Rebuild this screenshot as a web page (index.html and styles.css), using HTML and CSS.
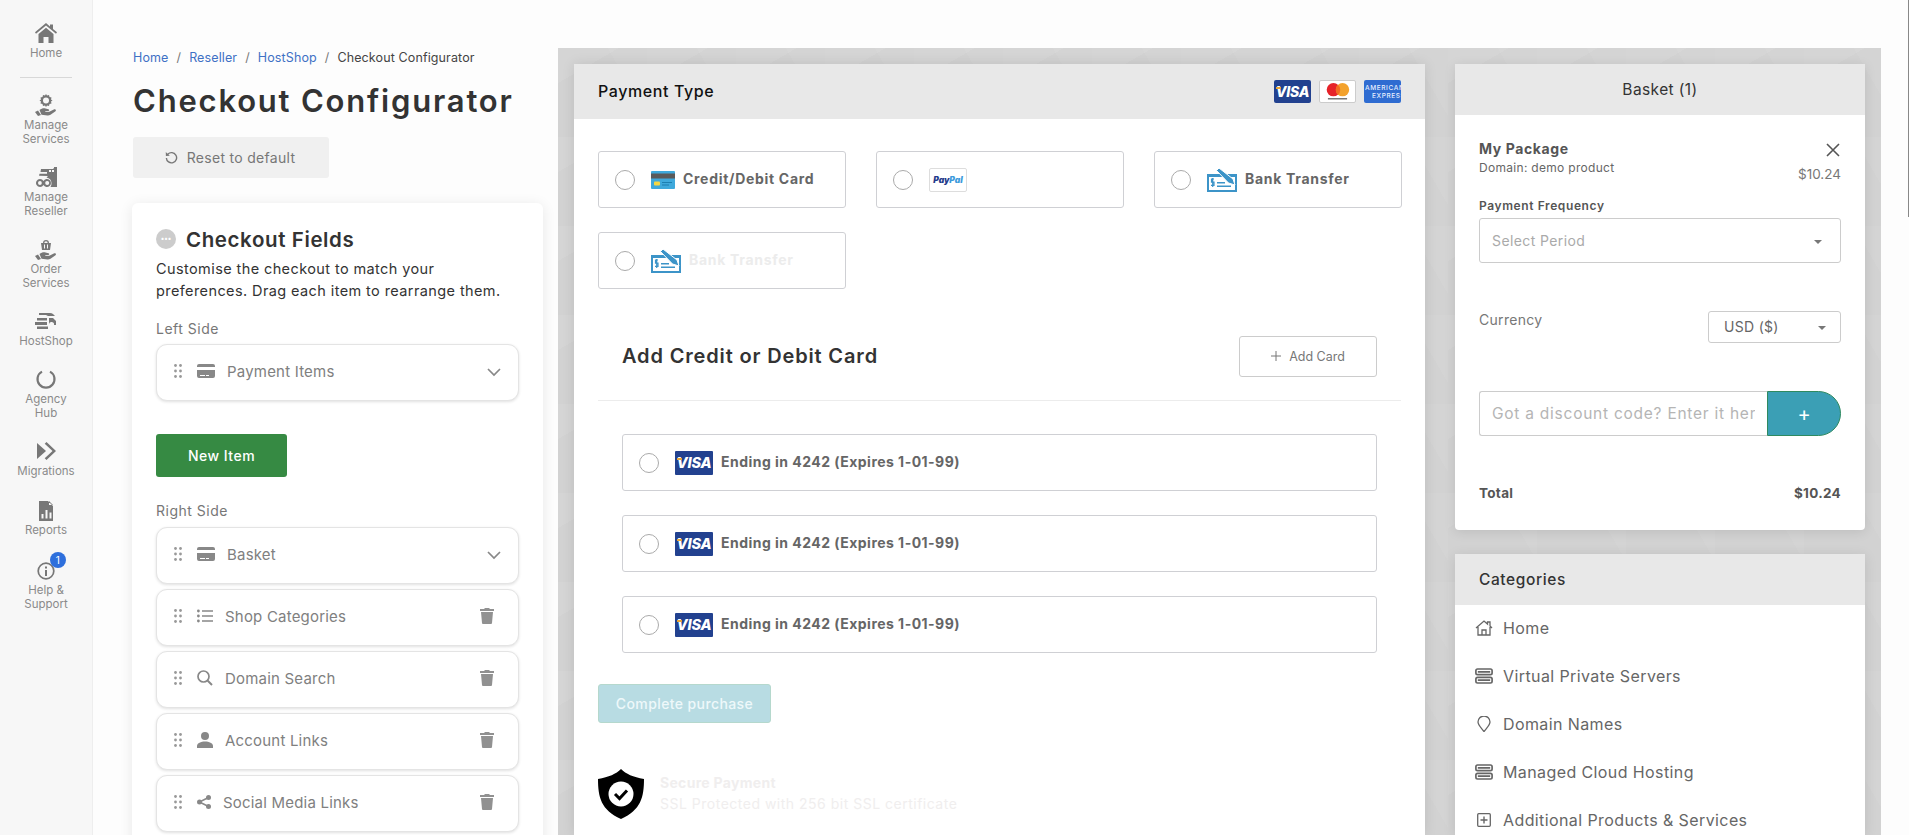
FILE: index.html
```html
<!DOCTYPE html>
<html lang="en">
<head>
  <meta charset="UTF-8">
  <meta name="viewport" content="width=device-width, initial-scale=1.0">
  <link rel="stylesheet" href="styles.css">
  <title>Checkout Configurator</title>
</head>
<body>
  <svg class="defs" width="0" height="0">
    <symbol id="i-grip" viewBox="0 0 8 14"><circle cx="1.5" cy="1.5" r="1.4"/><circle cx="6.5" cy="1.5" r="1.4"/><circle cx="1.5" cy="7" r="1.4"/><circle cx="6.5" cy="7" r="1.4"/><circle cx="1.5" cy="12.5" r="1.4"/><circle cx="6.5" cy="12.5" r="1.4"/></symbol>
    <symbol id="i-card" viewBox="0 0 18 14"><path d="M2 0h14a2 2 0 0 1 2 2v1H0V2a2 2 0 0 1 2-2zM0 6h18v6a2 2 0 0 1-2 2H2a2 2 0 0 1-2-2zm3 5v1h5v-1zm6 0v1h3v-1z" fill-rule="evenodd"/></symbol>
    <symbol id="i-chevron" viewBox="0 0 14 9"><path d="M1 1l6 6 6-6" fill="none" stroke="currentColor" stroke-width="1.7"/></symbol>
    <symbol id="i-trash" viewBox="0 0 14 16"><path d="M5 0h4l1 1h4v2H0V1h4zM1 4h12l-1 11a1 1 0 0 1-1 1H3a1 1 0 0 1-1-1z"/></symbol>
    <symbol id="i-list" viewBox="0 0 16 13"><circle cx="1.4" cy="1.5" r="1.4"/><circle cx="1.4" cy="6.5" r="1.4"/><circle cx="1.4" cy="11.5" r="1.4"/><path d="M5 .7h11v1.6H5zM5 5.7h11v1.6H5zM5 10.7h11v1.6H5z"/></symbol>
    <symbol id="i-search" viewBox="0 0 16 16"><circle cx="6.500" cy="6.500" r="5.500" fill="none" stroke="currentColor" stroke-width="1.700"/><path d="M10.500 10.500l4.500 4.500" stroke="currentColor" stroke-width="1.900" fill="none"/></symbol>
    <symbol id="i-user" viewBox="0 0 16 16"><circle cx="8" cy="4" r="4"/><path d="M0 16v-2c0-3 4-4.500 8-4.500s8 1.500 8 4.500v2z"/></symbol>
    <symbol id="i-share" viewBox="0 0 14 14"><circle cx="11.500" cy="2.500" r="2.500"/><circle cx="11.500" cy="11.500" r="2.500"/><circle cx="2.500" cy="7" r="2.500"/><path d="M2.500 7l9-4.500M2.500 7l9 4.500" stroke="currentColor" stroke-width="1.500" fill="none"/></symbol>
    <symbol id="i-server" viewBox="0 0 16 14"><rect x=".8" y=".8" width="14.400" height="5" rx="1.500" fill="none" stroke="currentColor" stroke-width="1.500"/><rect x=".8" y="8.200" width="14.400" height="5" rx="1.500" fill="none" stroke="currentColor" stroke-width="1.500"/><path d="M2.500 2.500h11v1.600h-11zM2.500 9.900h11v1.600h-11z"/></symbol>
  </svg>

  <nav class="rail">
    <a class="rail-item">
      <svg class="rail-icon" viewBox="0 0 22 20"><path d="M11 0l4 3.400V1.500h3v4.400l4 3.400-1 1.400L11 2.400 1 10.700 0 9.300zM3.500 11L11 4.800l7.500 6.200v9h-5v-6h-5v6h-5z"/></svg>
      <span>Home</span>
    </a>
    <hr class="rail-line">
    <a class="rail-item">
      <svg class="rail-icon" viewBox="0 0 22 22"><path d="M11 0l1 1.500 2-.5.500 2 2 .5-.5 2 1.500 1-1.500 1 .5 2-2 .5-.5 2-2-.5-1 1.500-1-1.500-2 .5-.5-2-2-.5.500-2L4.500 6.500 6 5.500l-.5-2 2-.5.500-2 2 .5zm0 3.500a3 3 0 1 0 0 6 3 3 0 0 0 0-6z" fill-rule="evenodd"/><path d="M0 18l3-1.500 3 4.500-3 1zM4.500 16c2-1.500 4-2 6-1.500l3 .8c1 .3 1 1.700-.2 1.800l-3 .1v.7l4-.1 5-2.500c1.300-.5 2.300 1 1.200 1.900l-5 3.500c-1 .6-2 .8-3 .7l-6-.6z"/></svg>
      <span>Manage<br>Services</span>
    </a>
    <a class="rail-item">
      <svg class="rail-icon" viewBox="0 0 22 20"><path d="M6 2h12l1-1v-1h3v20H15.500a6 6 0 0 0 1-4 6 6 0 0 0-5-5.500L13 9l-9-.2.500-2H12V5H5.500zM14 3v2h2V3zm3 0v2h2V3z" fill-rule="evenodd"/><path d="M5 12a4 4 0 0 1 3.500 2 4 4 0 1 1 0 4A4 4 0 1 1 5 12zm0 2a2 2 0 1 0 0 4 2 2 0 0 0 1.800-2A2 2 0 0 0 5 14zm7 0a2 2 0 0 0-1.800 2 2 2 0 1 0 1.800-2z" fill-rule="evenodd"/></svg>
      <span>Manage<br>Reseller</span>
    </a>
    <a class="rail-item">
      <svg class="rail-icon" viewBox="0 0 22 22"><path d="M6 5h10l-1 7H7zM9 6.500v4h1v-4zm3 0v4h1v-4z" fill-rule="evenodd"/><path d="M8 5a3 3 0 0 1 6 0h-1.300a1.700 1.700 0 0 0-3.400 0z"/><path d="M0 18l3-1.500 3 4.500-3 1zM4.500 16c2-1.500 4-2 6-1.500l3 .8c1 .3 1 1.700-.2 1.800l-3 .1v.7l4-.1 5-2.500c1.300-.5 2.300 1 1.200 1.900l-5 3.500c-1 .6-2 .8-3 .7l-6-.6z"/></svg>
      <span>Order<br>Services</span>
    </a>
    <a class="rail-item">
      <svg class="rail-icon" viewBox="0 0 22 20"><path d="M4 2h11a5 5 0 0 1 3 1l2 2h-7l-2-1H4zM2 7h10v2.500H2zM0 11h12v3H0zM14 7h4l3 3v4h-2a2.500 2.500 0 0 0-5-1zM2 15.500h11V18H2z"/></svg>
      <span>HostShop</span>
    </a>
    <a class="rail-item">
      <svg class="rail-icon" viewBox="0 0 22 22"><path d="M15 3.600A8.500 8.500 0 1 1 7 3.600" fill="none" stroke="currentColor" stroke-width="2.200"/></svg>
      <span>Agency<br>Hub</span>
    </a>
    <a class="rail-item">
      <svg class="rail-icon" viewBox="0 0 22 20"><path d="M2 2l9 8-9 8zM11.500 1L21 10l-9.500 9-1.800-1.800L17.500 10 9.700 2.800z"/></svg>
      <span>Migrations</span>
    </a>
    <a class="rail-item rail-reports">
      <svg class="rail-icon" viewBox="0 0 22 22"><path d="M4 2h9l5 5v15H4zM14 2l4 4h-4zM6.500 15v4.500h2V15zm4-4v8.500h2V11zm4 2.500v6h2v-6z" fill-rule="evenodd"/></svg>
      <span>Reports</span>
    </a>
    <a class="rail-item rail-help">
      <i class="rail-badge">1</i>
      <svg class="rail-icon" viewBox="0 0 22 22"><circle cx="11" cy="12" r="7.800" fill="none" stroke="currentColor" stroke-width="1.700"/><path d="M10 11h2v6h-2zM10 7.500h2v2h-2z"/></svg>
      <span>Help &amp;<br>Support</span>
    </a>
  </nav>

  <section class="config">
    <div class="crumbs">
      <a>Home</a><i>/</i><a>Reseller</a><i>/</i><a>HostShop</a><i>/</i><span>Checkout Configurator</span>
    </div>
    <h1>Checkout Configurator</h1>
    <button class="reset">
      <svg class="reset-icon" viewBox="0 0 14 14"><path d="M3 3.500A5.500 5.500 0 1 1 1.500 7.500" fill="none" stroke="currentColor" stroke-width="1.500"/><path d="M.8 1.200L1 5.500l4.200-.4z"/></svg>
      Reset to default
    </button>

    <div class="fields">
      <h2><span class="dots">&#8226;&#8226;&#8226;</span>Checkout Fields</h2>
      <p class="intro">Customise the checkout to match your<br>preferences. Drag each item to rearrange them.</p>

      <div class="side-label first">Left Side</div>
      <div class="field">
        <svg class="grip"><use href="#i-grip"/></svg>
        <svg class="ficon wide"><use href="#i-card"/></svg>
        <span class="fname">Payment Items</span>
        <svg class="chev"><use href="#i-chevron"/></svg>
      </div>

      <button class="new-item">New Item</button>

      <div class="side-label">Right Side</div>
      <div class="field">
        <svg class="grip"><use href="#i-grip"/></svg>
        <svg class="ficon wide"><use href="#i-card"/></svg>
        <span class="fname">Basket</span>
        <svg class="chev"><use href="#i-chevron"/></svg>
      </div>
      <div class="field">
        <svg class="grip"><use href="#i-grip"/></svg>
        <svg class="ficon"><use href="#i-list"/></svg>
        <span class="fname">Shop Categories</span>
        <svg class="bin"><use href="#i-trash"/></svg>
      </div>
      <div class="field">
        <svg class="grip"><use href="#i-grip"/></svg>
        <svg class="ficon"><use href="#i-search"/></svg>
        <span class="fname">Domain Search</span>
        <svg class="bin"><use href="#i-trash"/></svg>
      </div>
      <div class="field">
        <svg class="grip"><use href="#i-grip"/></svg>
        <svg class="ficon"><use href="#i-user"/></svg>
        <span class="fname">Account Links</span>
        <svg class="bin"><use href="#i-trash"/></svg>
      </div>
      <div class="field">
        <svg class="grip"><use href="#i-grip"/></svg>
        <svg class="ficon tiny"><use href="#i-share"/></svg>
        <span class="fname">Social Media Links</span>
        <svg class="bin"><use href="#i-trash"/></svg>
      </div>
    </div>
  </section>

  <section class="preview">
    <div class="pay-card">
      <div class="pay-head">
        <span>Payment Type</span>
        <div class="brands">
          <span class="visa"><b>VISA</b></span>
          <span class="mc"><svg viewBox="0 0 37 23"><circle cx="14" cy="9.500" r="7.300" fill="#e62229"/><circle cx="24" cy="9.500" r="7.300" fill="#f3a22d"/><path d="M19 4a7.300 7.300 0 0 1 0 11 7.300 7.300 0 0 1 0-11z" fill="#f36b21"/><path d="M8 19.500h21" stroke="#777" stroke-width="1.500"/></svg></span>
          <span class="amex">AMERICAN<br><em>EXPRESS</em></span>
        </div>
      </div>
      <div class="pay-body">
        <div class="options">
          <label class="option">
            <i class="radio"></i>
            <svg class="opt-icon" viewBox="0 0 24 18"><rect width="24" height="18" rx="1" fill="#3fa9dc"/><rect y="2.500" width="24" height="5" fill="#5a5a5a"/><rect x="3" y="10.500" width="6" height="4" rx="1" fill="#f6d743"/><path d="M11 11h10v1H11zM11 13.500h7v1h-7z" fill="#1d7fb0"/></svg>
            <span>Credit/Debit Card</span>
          </label>
          <label class="option">
            <i class="radio"></i>
            <span class="paypal"><b>Pay</b><b>Pal</b></span>
          </label>
          <label class="option">
            <i class="radio"></i>
            <svg class="opt-icon bank" viewBox="0 0 30 24"><path d="M0 6h30v18H0zM2 9v13h26V9z" fill-rule="evenodd"/><path d="M9.500 2.500L12 0l14 11 2 6-6.500-2z" stroke="#fff" stroke-width="1"/><path d="M7 11H4.500v3.200H7v3.200H4M5.700 10v9" fill="none" stroke="currentColor" stroke-width="1.200"/><path d="M10 14h8v1.500h-8zM10 17.500h14V19H10z"/></svg>
            <span>Bank Transfer</span>
          </label>
          <label class="option">
            <i class="radio"></i>
            <svg class="opt-icon bank" viewBox="0 0 30 24"><path d="M0 6h30v18H0zM2 9v13h26V9z" fill-rule="evenodd"/><path d="M9.500 2.500L12 0l14 11 2 6-6.500-2z" stroke="#fff" stroke-width="1"/><path d="M7 11H4.500v3.200H7v3.200H4M5.700 10v9" fill="none" stroke="currentColor" stroke-width="1.200"/><path d="M10 14h8v1.500h-8zM10 17.500h14V19H10z"/></svg>
            <span class="faded">Bank Transfer</span>
          </label>
        </div>

        <div class="add-row">
          <h3>Add Credit or Debit Card</h3>
          <button class="add-card"><svg viewBox="0 0 10 10"><path d="M5 0v10M0 5h10" stroke="currentColor" stroke-width="1"/></svg>Add Card</button>
        </div>

        <div class="saved">
          <label class="saved-row"><i class="radio"></i><span class="visa big"><b>VISA</b></span><span>Ending in 4242 (Expires 1-01-99)</span></label>
          <label class="saved-row"><i class="radio"></i><span class="visa big"><b>VISA</b></span><span>Ending in 4242 (Expires 1-01-99)</span></label>
          <label class="saved-row"><i class="radio"></i><span class="visa big"><b>VISA</b></span><span>Ending in 4242 (Expires 1-01-99)</span></label>
        </div>

        <button class="complete">Complete purchase</button>

        <div class="secure">
          <svg class="shield" viewBox="0 0 46 50"><path d="M23 0c5 5 12 8 23 10 0 18-3 31-23 40C3 41 0 28 0 10 11 8 18 5 23 0z"/><circle cx="23" cy="25" r="12.500" fill="#fff"/><path d="M17 25l4.500 4.500L29 21.500" fill="none" stroke="#000" stroke-width="3"/></svg>
          <div class="secure-text">
            <b>Secure Payment</b>
            <span>SSL Protected with 256 bit SSL certificate</span>
          </div>
        </div>
      </div>
    </div>

    <div class="right-col">
      <div class="basket">
        <div class="basket-head">Basket (1)</div>
        <div class="basket-body">
          <div class="pack">
            <div>
              <div class="pack-name">My Package</div>
              <div class="pack-domain">Domain: demo product</div>
            </div>
            <div class="pack-side">
              <svg class="close" viewBox="0 0 14 14"><path d="M1 1l12 12M13 1L1 13" stroke="currentColor" stroke-width="1.600"/></svg>
              <span>$10.24</span>
            </div>
          </div>
          <div class="freq-label">Payment Frequency</div>
          <div class="select period"><span>Select Period</span><i class="caret"></i></div>
          <div class="currency">
            <span>Currency</span>
            <div class="select select-sm"><span>USD ($)</span><i class="caret"></i></div>
          </div>
          <div class="discount">
            <div class="discount-input"><span>Got a discount code? Enter it here</span></div>
            <button class="discount-btn">+</button>
          </div>
          <div class="total"><span>Total</span><span>$10.24</span></div>
        </div>
      </div>

      <div class="cats">
        <div class="cats-head">Categories</div>
        <a class="cat"><svg viewBox="0 0 18 16"><path d="M1 8l8-7 3.500 3V2H15v4l2 2M3 7v8h12V7M7 15v-5h4v5" fill="none" stroke="currentColor" stroke-width="1.300"/></svg>Home</a>
        <a class="cat"><svg><use href="#i-server"/></svg>Virtual Private Servers</a>
        <a class="cat"><svg viewBox="0 0 18 16"><path d="M9 15.500C6 11.500 3 9 3 6a6 6 0 0 1 12 0c0 3-3 5.500-6 9.500z" fill="none" stroke="currentColor" stroke-width="1.300"/></svg>Domain Names</a>
        <a class="cat"><svg><use href="#i-server"/></svg>Managed Cloud Hosting</a>
        <a class="cat"><svg viewBox="0 0 18 16"><rect x="2.700" y="1.700" width="12.600" height="12.600" rx="1" fill="none" stroke="currentColor" stroke-width="1.300"/><path d="M9 4.500v7M5.500 8h7" stroke="currentColor" stroke-width="1.400"/></svg>Additional Products &amp; Services</a>
      </div>
    </div>
  </section>

  <div class="scroll-thumb"></div>
</body>
</html>
```

FILE: styles.css
```css
* {
  box-sizing: border-box;
}

html,
body {
  height: 100%;
  overflow: hidden;
}

body {
  margin: 0;
  display: flex;
  font-family: Inter, "Noto Sans", sans-serif;
  color: #666;
  background: #fdfdfd;
}

.defs {
  position: absolute;
}

svg {
  fill: currentColor;
}

button {
  font-family: inherit;
  cursor: pointer;
}

/* left icon rail */
.rail {
  width: 93px;
  flex: none;
  padding-top: 22px;
  display: flex;
  flex-direction: column;
  align-items: center;
  gap: 20px;
  background: #f7f7f7;
  border-right: 1px solid #eee;
}

.rail-item {
  position: relative;
  display: flex;
  flex-direction: column;
  align-items: center;
  font-size: 11.5px;
  line-height: 14px;
  text-align: center;
  color: #8a8a8a;
}

.rail-reports {
  margin-top: 1px;
}

.rail-help {
  margin-top: 2px;
}

.rail-icon {
  width: 22px;
  height: 22px;
  margin-bottom: 2px;
  color: #777;
}

.rail-line {
  width: 52px;
  margin: -3px 0 -4px;
  border: 0;
  border-top: 1px solid #d8d8d8;
}

.rail-badge {
  position: absolute;
  top: -7px;
  right: 2px;
  width: 16px;
  height: 16px;
  border-radius: 50%;
  background: #2e6fdc;
  color: #fff;
  font-style: normal;
  font-size: 10px;
  line-height: 16px;
}

/* configurator column */
.config {
  width: 465px;
  height: 835px;
  flex: none;
  overflow: hidden;
  padding: 48px 15px 0 40px;
}

.crumbs {
  display: flex;
  height: 18px;
  align-items: center;
  font-size: 12.5px;
  letter-spacing: .12px;
  color: #444;
  white-space: nowrap;
}

.crumbs a {
  color: #3f71c5;
}

.crumbs i {
  margin: 0 8px;
  font-style: normal;
  color: #777;
}

h1 {
  margin: 15px 0 16px;
  font-size: 31px;
  line-height: 40px;
  font-weight: 600;
  color: #333;
  letter-spacing: 1.8px;
  white-space: nowrap;
}

.reset {
  display: flex;
  align-items: center;
  justify-content: center;
  gap: 9px;
  width: 196px;
  height: 41px;
  padding-right: 8px;
  border: 0;
  border-radius: 3px;
  background: #f0f0f0;
  font-size: 14px;
  letter-spacing: .3px;
  color: #777;
}

.reset-icon {
  width: 13px;
  height: 13px;
}

.fields {
  height: 800px;
  margin: 25px 0 0 -1px;
  padding: 26px 24px 0 24px;
  background: #fff;
  border-radius: 6px;
  box-shadow: 0 2px 14px rgba(0, 0, 0, .09);
}

h2 {
  display: flex;
  align-items: center;
  gap: 10px;
  height: 20px;
  margin: 0;
  font-size: 20.5px;
  font-weight: 600;
  letter-spacing: .6px;
  color: #333;
  white-space: nowrap;
}

.dots {
  width: 20px;
  height: 20px;
  border-radius: 50%;
  background: #ccc;
  color: #fff;
  font-size: 7px;
  line-height: 20px;
  letter-spacing: 0;
  text-align: center;
}

.intro {
  margin: 9px 0 0;
  font-size: 14.5px;
  line-height: 22px;
  letter-spacing: .4px;
  color: #333;
  white-space: nowrap;
}

.side-label {
  margin: 24px 0 6px;
  font-size: 14px;
  line-height: 20px;
  letter-spacing: .5px;
  color: #777;
}

.side-label.first {
  margin-top: 17px;
  margin-bottom: 5px;
}

.field {
  display: flex;
  align-items: center;
  height: 57px;
  margin-bottom: 5px;
  padding: 0 17px 3px 17px;
  background: #fff;
  border: 1px solid #e4e4e4;
  border-radius: 11px;
  box-shadow: 0 1px 3px rgba(0, 0, 0, .12);
  font-size: 15px;
  letter-spacing: .2px;
  color: #808080;
}

.grip {
  width: 8px;
  height: 14px;
  margin: 0 15px 0 0;
  color: #999;
}

.ficon {
  width: 16px;
  height: 16px;
  margin-right: 12px;
  color: #888;
}

.ficon.wide {
  width: 18px;
  height: 14px;
}

.ficon.tiny {
  width: 14px;
  height: 14px;
}

.fname {
  flex: 1;
  white-space: nowrap;
}

.chev {
  width: 14px;
  height: 9px;
  margin-top: 3px;
  color: #888;
}

.bin {
  width: 14px;
  height: 16px;
  margin-right: 7px;
  color: #919191;
}

.new-item {
  display: block;
  width: 131px;
  height: 43px;
  margin-top: 33px;
  border: 0;
  border-radius: 3px;
  background: #368a43;
  color: #fff;
  font-size: 14px;
  font-weight: 500;
  letter-spacing: .5px;
}

/* preview pane */
.preview {
  flex: none;
  display: flex;
  gap: 30px;
  width: 1323px;
  height: 787px;
  margin-top: 48px;
  padding: 16px 16px 0;
  overflow: hidden;
  background-color: #d2d2d2;
  background-image:
    linear-gradient(150deg, rgba(255, 255, 255, .07) 25%, transparent 25%),
    linear-gradient(60deg, transparent 72%, rgba(255, 255, 255, .05) 72%);
  background-size: 89px 89px;
}

.pay-card {
  width: 851px;
  flex: none;
  height: 771px;
  background: #fff;
  box-shadow: 0 0 12px rgba(0, 0, 0, .1);
}

.pay-head {
  display: flex;
  align-items: center;
  justify-content: space-between;
  height: 55px;
  padding: 0 24px;
  background: #e8e8e8;
  font-size: 16px;
  font-weight: 500;
  letter-spacing: .6px;
  color: #111;
}

.pay-head > span {
  margin-bottom: 2px;
}

.brands {
  display: flex;
  gap: 8px;
}

.brands > span {
  display: block;
  width: 37px;
  height: 23px;
  border-radius: 2px;
  overflow: hidden;
}

.visa {
  position: relative;
  background: #22418f;
  color: #fff;
  font-size: 14px;
  line-height: 23px;
  text-align: center;
  font-style: italic;
  letter-spacing: -.2px;
}

.visa::before {
  content: "";
  position: absolute;
  top: 7px;
  left: 2px;
  width: 5px;
  height: 2px;
  background: #e9a63a;
}

.visa b {
  font-weight: 800;
}

.brands .mc {
  background: #fff;
  border: 1px solid #ccc;
}

.mc svg {
  display: block;
  width: 100%;
  height: 100%;
}

.amex {
  padding: 4px 0 0 1px;
  background: #2f6cd1;
  color: #e8f0ff;
  font-size: 6.5px;
  line-height: 8px;
  white-space: nowrap;
}

.amex em {
  margin-left: 7px;
  font-style: normal;
}

.pay-body {
  padding: 32px 24px 0;
}

.options {
  display: grid;
  grid-template-columns: repeat(3, 248px);
  justify-content: space-between;
  gap: 24px 30px;
}

.option {
  display: flex;
  align-items: center;
  height: 57px;
  padding: 0 0 0 16px;
  border: 1px solid #cfd0d4;
  border-radius: 3px;
  font-size: 14px;
  font-weight: 700;
  letter-spacing: .7px;
  color: #666;
  white-space: nowrap;
}

.option span,
.saved-row > span:last-child {
  margin-bottom: 2px;
}

.radio {
  flex: none;
  width: 20px;
  height: 20px;
  border: 1px solid #aaa;
  border-radius: 50%;
  background: #fff;
}

.opt-icon {
  width: 24px;
  height: 18px;
  margin: 0 8px 0 16px;
}

.opt-icon.bank {
  width: 30px;
  height: 24px;
  color: #3c94c8;
}

.option .paypal {
  width: 38px;
  height: 24px;
  margin: 0 0 0 16px;
  border: 1px solid #ddd;
  border-radius: 2px;
  font-size: 8.5px;
  line-height: 22px;
  letter-spacing: 0;
  text-align: center;
  font-style: italic;
  color: #233a8b;
}

.paypal b + b {
  color: #3d9bdc;
}

.option .faded {
  color: #ececec;
}

.add-row {
  display: flex;
  align-items: center;
  justify-content: space-between;
  height: 65px;
  margin-top: 47px;
  padding: 0 24px 24px;
  border-bottom: 1px solid #ececec;
}

h3 {
  margin: 0;
  font-size: 20px;
  font-weight: 600;
  letter-spacing: .85px;
  color: #333;
}

.add-card {
  display: flex;
  align-items: center;
  justify-content: center;
  gap: 8px;
  width: 138px;
  height: 41px;
  border: 1px solid #ccc;
  border-radius: 3px;
  background: #fff;
  font-size: 12.5px;
  color: #777;
}

.add-card svg {
  width: 10px;
  height: 10px;
}

.saved {
  display: flex;
  flex-direction: column;
  gap: 24px;
  margin: 33px 24px 0;
}

.saved-row {
  display: flex;
  align-items: center;
  height: 57px;
  padding-left: 16px;
  border: 1px solid #cfd0d4;
  border-radius: 3px;
  font-size: 14px;
  font-weight: 700;
  letter-spacing: .47px;
  color: #666;
}

.visa.big {
  width: 38px;
  height: 24px;
  margin: 0 8px 0 16px;
  border-radius: 1px;
  font-size: 14.5px;
  line-height: 24px;
  letter-spacing: -.2px;
}

.complete {
  display: block;
  width: 173px;
  height: 39px;
  margin-top: 31px;
  border: 1px solid #b5d8cd;
  border-radius: 3px;
  background: #b8dce3;
  color: #eef8fa;
  font-size: 14px;
  font-weight: 500;
  letter-spacing: .4px;
}

.secure {
  display: flex;
  align-items: center;
  gap: 16px;
  margin-top: 46px;
}

.shield {
  width: 46px;
  height: 50px;
  color: #000;
}

.secure-text {
  display: flex;
  flex-direction: column;
  gap: 4px;
  margin-top: -2px;
  color: #f0eeee;
  font-size: 14px;
  line-height: 17px;
  letter-spacing: .5px;
}

.secure-text b {
  letter-spacing: .3px;
}

.right-col {
  width: 410px;
  flex: none;
  display: flex;
  flex-direction: column;
  gap: 24px;
}

.basket {
  background: #fff;
  border-radius: 0 0 4px 4px;
  box-shadow: 0 2px 12px rgba(0, 0, 0, .1);
}

.basket-head {
  height: 51px;
  background: #e8e8e8;
  font-size: 15.5px;
  line-height: 51px;
  letter-spacing: .4px;
  text-align: center;
  color: #333;
}

.basket-body {
  height: 415px;
  padding: 24px 24px 0;
}

.pack {
  display: flex;
  justify-content: space-between;
  height: 48px;
}

.pack-name {
  font-size: 14px;
  line-height: 20px;
  font-weight: 700;
  letter-spacing: .6px;
  color: #555;
}

.pack-domain {
  font-size: 12px;
  line-height: 18px;
  letter-spacing: .3px;
  color: #666;
}

.pack-side {
  display: flex;
  flex-direction: column;
  align-items: flex-end;
  font-size: 13.5px;
  color: #777;
}

.close {
  width: 14px;
  height: 14px;
  margin: 4px 1px 9px 0;
  color: #555;
}

.freq-label {
  margin-top: 11px;
  font-size: 12px;
  line-height: 16px;
  font-weight: 600;
  letter-spacing: .6px;
  color: #555;
}

.select {
  display: flex;
  align-items: center;
  justify-content: space-between;
  border: 1px solid #ccc;
  border-radius: 3px;
  white-space: nowrap;
}

.period {
  height: 45px;
  margin-top: 4px;
  padding: 0 18px 0 12px;
  font-size: 14px;
  letter-spacing: .4px;
  color: #aaa;
}

.select-sm {
  width: 133px;
  height: 32px;
  padding: 0 14px 0 15px;
  font-size: 14px;
  color: #666;
}

.caret {
  width: 0;
  height: 0;
  margin-top: 2px;
  border: 4px solid transparent;
  border-top: 4px solid #777;
  border-bottom: 0;
}

.currency {
  display: flex;
  justify-content: space-between;
  height: 32px;
  margin-top: 48px;
  font-size: 14px;
  line-height: 18px;
  letter-spacing: .3px;
  color: #777;
}

.discount {
  display: flex;
  height: 45px;
  margin-top: 48px;
}

.discount-input {
  flex: 1;
  min-width: 0;
  padding: 0 12px;
  border: 1px solid #ccc;
  border-right: 0;
  border-radius: 3px 0 0 3px;
  font-size: 15.5px;
  line-height: 43px;
  letter-spacing: .75px;
  white-space: nowrap;
  color: #b5b5b5;
}

.discount-input span {
  display: block;
  overflow: hidden;
}

.discount-btn {
  width: 74px;
  flex: none;
  padding: 0;
  border: 1px solid #2f8a60;
  border-radius: 0 23px 23px 0;
  background: #3b9fb5;
  color: #fff;
  font-size: 20px;
}

.total {
  display: flex;
  justify-content: space-between;
  margin-top: 47px;
  font-size: 13.5px;
  line-height: 20px;
  font-weight: 700;
  letter-spacing: .3px;
  color: #555;
}

.cats {
  flex: 1;
  height: 260px;
  background: #fff;
  box-shadow: 0 2px 12px rgba(0, 0, 0, .1);
}

.cats-head {
  height: 51px;
  padding-left: 24px;
  background: #e8e8e8;
  font-size: 15.5px;
  line-height: 51px;
  font-weight: 500;
  letter-spacing: .6px;
  color: #333;
}

.cat {
  display: flex;
  align-items: center;
  gap: 10px;
  height: 48px;
  padding: 0 0 2px 20px;
  font-size: 16px;
  letter-spacing: .4px;
  color: #666;
  white-space: nowrap;
}

.cat svg {
  width: 18px;
  height: 16px;
  color: #666;
}

.scroll-thumb {
  position: absolute;
  top: 0;
  right: 0;
  width: 1px;
  height: 217px;
  background: #888;
}
```
